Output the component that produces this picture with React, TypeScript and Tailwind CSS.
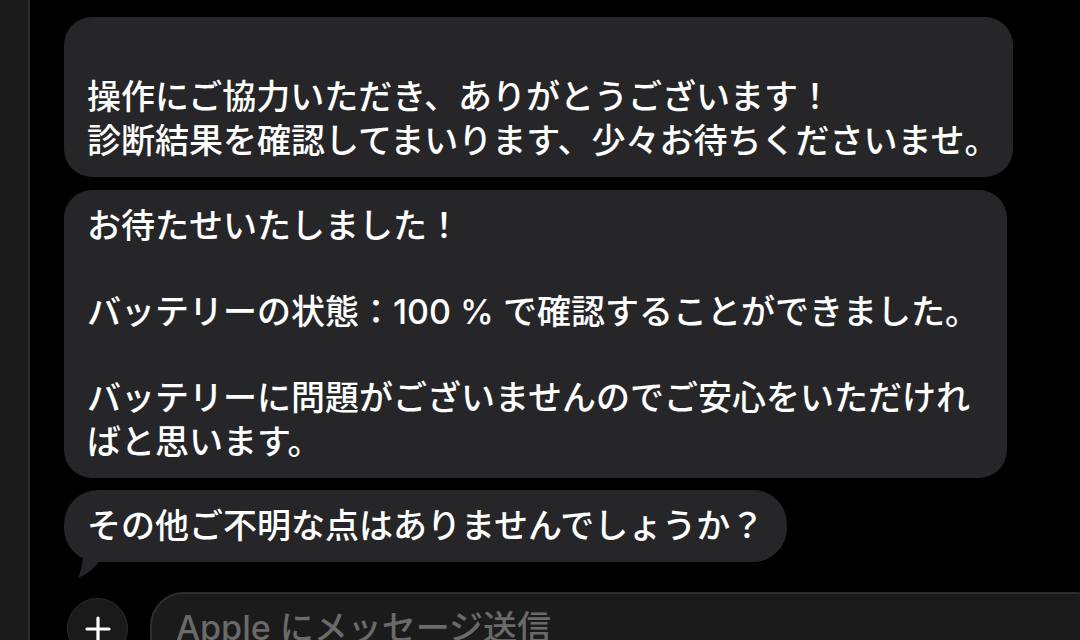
import React from "react";

const font = {
  fontFamily: '"Inter", "Noto Sans CJK JP", "Noto Sans", sans-serif',
};

export default function App() {
  return (
    <div
      className="w-[1080px] h-[640px] bg-black flex overflow-hidden text-white"
      style={font}
    >
      <div className="w-[30px] shrink-0 bg-[#1b1b1b] border-r-2 border-[#2b2b2b]" />
      <div className="flex-1 flex flex-col pl-[34px] pt-[17px]">
        {/* Bubble 1 */}
        <div className="w-[949px] rounded-[28px] bg-[#262628] px-[23px] py-[14px] text-[34px] leading-[44px] font-medium whitespace-nowrap">
          <div className="h-[44px]" />
          <div>操作にご協力いただき、ありがとうございます！</div>
          <div>診断結果を確認してまいります、少々お待ちくださいませ。</div>
        </div>

        {/* Bubble 2 */}
        <div className="mt-[13px] w-[943px] rounded-[28px] bg-[#262628] px-[23px] py-[14px] text-[34px] leading-[44px] font-medium whitespace-nowrap">
          <div>お待たせいたしました！</div>
          <div className="h-[42px]" />
          <div>バッテリーの状態：100 % で確認することができました。</div>
          <div className="h-[42px]" />
          <div>バッテリーに問題がございませんのでご安心をいただけれ</div>
          <div>ばと思います。</div>
        </div>

        {/* Bubble 3 */}
        <div className="relative mt-[12px] w-fit">
          <svg
            className="absolute left-[8px] bottom-[-16px]"
            width="40"
            height="36"
            viewBox="0 0 40 36"
          >
            <path
              d="M12 0 C12 14 10 26 6 36 C16 32 26 24 34 10 L34 0 Z"
              fill="#262628"
            />
          </svg>
          <div className="relative rounded-[34px] bg-[#262628] px-[23px] py-[14px] text-[34px] leading-[44px] font-medium whitespace-nowrap">
            その他ご不明な点はありませんでしょうか？
          </div>
        </div>

        {/* Input row */}
        <div className="mt-[30px] flex items-start">
          <div className="ml-[3px] mt-[6px] w-[61px] h-[61px] shrink-0 rounded-full bg-[#1a1a1a] border border-[#2c2c2c] flex items-center justify-center">
            <svg width="26" height="26" viewBox="0 0 26 26">
              <path
                d="M13 2 V24 M2 13 H24"
                stroke="white"
                strokeWidth="3.2"
                strokeLinecap="round"
              />
            </svg>
          </div>
          <div className="ml-[22px] w-[960px] h-[80px] shrink-0 rounded-[34px] bg-[#1b1b1b] border-2 border-[#2e2e2e] pl-[24px] pt-[12px] text-[34px] leading-[44px] font-medium text-[#6a6a6a] whitespace-nowrap">
            Apple にメッセージ送信
          </div>
        </div>
      </div>
    </div>
  );
}
